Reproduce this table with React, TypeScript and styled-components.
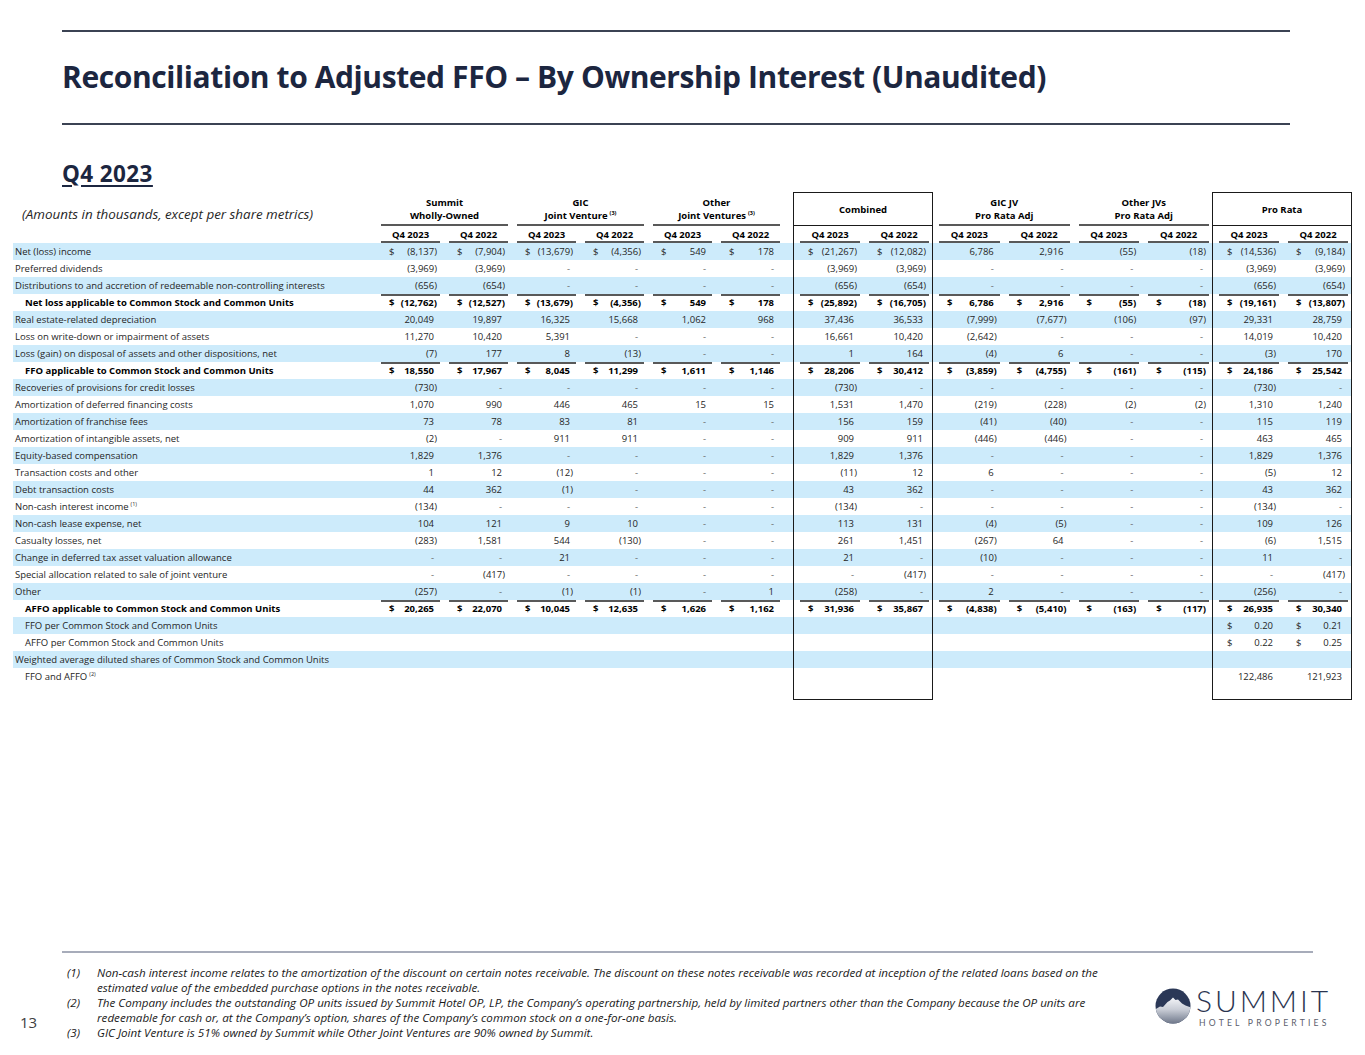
import React from 'react';
import styled, { createGlobalStyle, css } from 'styled-components';

const GlobalStyle = createGlobalStyle`
  html, body {
    margin: 0;
    padding: 0;
    background: #ffffff;
  }
  body {
    font-family: 'Open Sans', 'Liberation Sans', sans-serif;
    color: #262626;
  }
`;

const INK = '#1c2640';
const STRIPE = '#cdebfb';
const LINE = '#595959';
const BOX = '#1a1a1a';
const COLS = '362px repeat(6, 68px) 10px 70px 70px repeat(4, 69.75px) 70px 70px';

type Edge = 'left' | 'right' | undefined;

interface RowData {
  label: string;
  note?: string;
  values: string[];
  total?: boolean;
  indent?: boolean;
}

const E = '';
const empty12 = Array(12).fill(E);

const rows: RowData[] = [
  { label: 'Net (loss) income', values: ['$(8,137)', '$(7,904)', '$(13,679)', '$(4,356)', '$549', '$178', '$(21,267)', '$(12,082)', '6,786', '2,916', '(55)', '(18)', '$(14,536)', '$(9,184)'] },
  { label: 'Preferred dividends', values: ['(3,969)', '(3,969)', '-', '-', '-', '-', '(3,969)', '(3,969)', '-', '-', '-', '-', '(3,969)', '(3,969)'] },
  { label: 'Distributions to and accretion of redeemable non-controlling interests', values: ['(656)', '(654)', '-', '-', '-', '-', '(656)', '(654)', '-', '-', '-', '-', '(656)', '(654)'] },
  { label: 'Net loss applicable to Common Stock and Common Units', total: true, values: ['$(12,762)', '$(12,527)', '$(13,679)', '$(4,356)', '$549', '$178', '$(25,892)', '$(16,705)', '$6,786', '$2,916', '$(55)', '$(18)', '$(19,161)', '$(13,807)'] },
  { label: 'Real estate-related depreciation', values: ['20,049', '19,897', '16,325', '15,668', '1,062', '968', '37,436', '36,533', '(7,999)', '(7,677)', '(106)', '(97)', '29,331', '28,759'] },
  { label: 'Loss on write-down or impairment of assets', values: ['11,270', '10,420', '5,391', '-', '-', '-', '16,661', '10,420', '(2,642)', '-', '-', '-', '14,019', '10,420'] },
  { label: 'Loss (gain) on disposal of assets and other dispositions, net', values: ['(7)', '177', '8', '(13)', '-', '-', '1', '164', '(4)', '6', '-', '-', '(3)', '170'] },
  { label: 'FFO applicable to Common Stock and Common Units', total: true, values: ['$18,550', '$17,967', '$8,045', '$11,299', '$1,611', '$1,146', '$28,206', '$30,412', '$(3,859)', '$(4,755)', '$(161)', '$(115)', '$24,186', '$25,542'] },
  { label: 'Recoveries of provisions for credit losses', values: ['(730)', '-', '-', '-', '-', '-', '(730)', '-', '-', '-', '-', '-', '(730)', '-'] },
  { label: 'Amortization of deferred financing costs', values: ['1,070', '990', '446', '465', '15', '15', '1,531', '1,470', '(219)', '(228)', '(2)', '(2)', '1,310', '1,240'] },
  { label: 'Amortization of franchise fees', values: ['73', '78', '83', '81', '-', '-', '156', '159', '(41)', '(40)', '-', '-', '115', '119'] },
  { label: 'Amortization of intangible assets, net', values: ['(2)', '-', '911', '911', '-', '-', '909', '911', '(446)', '(446)', '-', '-', '463', '465'] },
  { label: 'Equity-based compensation', values: ['1,829', '1,376', '-', '-', '-', '-', '1,829', '1,376', '-', '-', '-', '-', '1,829', '1,376'] },
  { label: 'Transaction costs and other', values: ['1', '12', '(12)', '-', '-', '-', '(11)', '12', '6', '-', '-', '-', '(5)', '12'] },
  { label: 'Debt transaction costs', values: ['44', '362', '(1)', '-', '-', '-', '43', '362', '-', '-', '-', '-', '43', '362'] },
  { label: 'Non-cash interest income', note: '(1)', values: ['(134)', '-', '-', '-', '-', '-', '(134)', '-', '-', '-', '-', '-', '(134)', '-'] },
  { label: 'Non-cash lease expense, net', values: ['104', '121', '9', '10', '-', '-', '113', '131', '(4)', '(5)', '-', '-', '109', '126'] },
  { label: 'Casualty losses, net', values: ['(283)', '1,581', '544', '(130)', '-', '-', '261', '1,451', '(267)', '64', '-', '-', '(6)', '1,515'] },
  { label: 'Change in deferred tax asset valuation allowance', values: ['-', '-', '21', '-', '-', '-', '21', '-', '(10)', '-', '-', '-', '11', '-'] },
  { label: 'Special allocation related to sale of joint venture', values: ['-', '(417)', '-', '-', '-', '-', '-', '(417)', '-', '-', '-', '-', '-', '(417)'] },
  { label: 'Other', values: ['(257)', '-', '(1)', '(1)', '-', '1', '(258)', '-', '2', '-', '-', '-', '(256)', '-'] },
  { label: 'AFFO applicable to Common Stock and Common Units', total: true, values: ['$20,265', '$22,070', '$10,045', '$12,635', '$1,626', '$1,162', '$31,936', '$35,867', '$(4,838)', '$(5,410)', '$(163)', '$(117)', '$26,935', '$30,340'] },
  { label: 'FFO per Common Stock and Common Units', indent: true, values: [...empty12, '$0.20', '$0.21'] },
  { label: 'AFFO per Common Stock and Common Units', indent: true, values: [...empty12, '$0.22', '$0.25'] },
  { label: 'Weighted average diluted shares of Common Stock and Common Units', values: [...empty12, E, E] },
  { label: 'FFO and AFFO', note: '(2)', indent: true, values: [...empty12, '122,486', '121,923'] },
];

const groups = [
  { top: 'Summit', bottom: 'Wholly-Owned' },
  { top: 'GIC', bottom: 'Joint Venture', note: '(3)' },
  { top: 'Other', bottom: 'Joint Ventures', note: '(3)' },
];

const adjGroups = [
  { top: 'GIC JV', bottom: 'Pro Rata Adj' },
  { top: 'Other JVs', bottom: 'Pro Rata Adj' },
];

const edgeOf = (i: number): Edge => (i === 6 || i === 12 ? 'left' : i === 7 || i === 13 ? 'right' : undefined);

const boxEdges = (edge: Edge) => css`
  ${edge === 'left' && `border-left: 1px solid ${BOX};`}
  ${edge === 'right' && `border-right: 1px solid ${BOX};`}
`;

const rule = (pos: 'top' | 'bottom') => css`
  background-image: linear-gradient(${LINE}, ${LINE});
  background-repeat: no-repeat;
  background-size: calc(100% - 9px) 2px;
  background-position: 6px ${pos === 'top' ? '0' : '100%'};
`;

const Page = styled.div`
  width: 1365px;
  height: 1055px;
  box-sizing: border-box;
  padding-top: 30px;
  display: flex;
  flex-direction: column;
  overflow: hidden;
`;

const HeadRule = styled.div<{ $gap: number }>`
  height: 2px;
  margin: ${p => p.$gap}px 75px 0 62px;
  background: #3b4353;
`;

const Title = styled.h1`
  margin: 27px 0 0 62px;
  font-weight: 700;
  font-size: 30px;
  line-height: 36px;
  letter-spacing: -0.4px;
  color: ${INK};
`;

const Period = styled.h2`
  margin: 36px 0 0 62px;
  font-weight: 700;
  font-size: 22.5px;
  line-height: 26px;
  letter-spacing: 0.4px;
  color: ${INK};
  text-decoration: underline;
  text-decoration-thickness: 2px;
  text-underline-offset: 3px;
`;

const Table = styled.div`
  margin: 5px 0 0 13px;
  width: 1339px;
  font-size: 9.5px;
`;

const Grid = styled.div<{ $height: number; $striped?: boolean; $total?: boolean }>`
  display: grid;
  grid-template-columns: ${COLS};
  height: ${p => p.$height}px;
  line-height: 17px;
  background: ${p => (p.$striped ? STRIPE : 'transparent')};
  color: ${p => (p.$total ? '#000000' : '#262626')};
  font-weight: ${p => (p.$total ? 700 : 400)};
`;

const Caption = styled.div`
  align-self: center;
  padding: 10px 0 0 9px;
  font-style: italic;
  font-size: 13.4px;
  line-height: 18px;
  color: #262626;
`;

const GroupHead = styled.div`
  grid-column: span 2;
  display: flex;
  flex-direction: column;
  justify-content: flex-end;
  align-items: center;
  padding: 0 0 4px 3px;
  font-weight: 700;
  line-height: 13px;
  color: #000000;
  ${rule('bottom')}
`;

const BoxHead = styled.div`
  grid-column: span 2;
  display: flex;
  align-items: center;
  justify-content: center;
  border: 1px solid ${BOX};
  font-weight: 700;
  color: #000000;
`;

const Sup = styled.sup`
  font-size: 5.5px;
  line-height: 0;
  margin-left: 2px;
  vertical-align: 4px;
`;

const PeriodHead = styled.div<{ $edge?: Edge }>`
  text-align: center;
  padding-left: 3px;
  font-weight: 700;
  color: #000000;
  ${rule('bottom')}
  ${p => boxEdges(p.$edge)}
`;

const Label = styled.div<{ $indent?: boolean }>`
  padding-left: ${p => (p.$indent ? '12px' : '2px')};
  white-space: nowrap;
`;

const Value = styled.div<{ $edge?: Edge; $rule?: boolean }>`
  display: flex;
  justify-content: space-between;
  padding: 0 6px 0 14px;
  white-space: nowrap;
  ${p => p.$rule && rule('top')}
  ${p => boxEdges(p.$edge)}
`;

const Amount = styled.span<{ $hang?: boolean; $dash?: boolean }>`
  padding-right: ${p => (p.$hang ? '3px' : '0')};
  color: ${p => (p.$dash ? '#666666' : 'inherit')};
`;

const Closer = styled.div<{ $edge?: Edge }>`
  ${p => boxEdges(p.$edge)}
  ${p => p.$edge && `border-bottom: 1px solid ${BOX};`}
`;

const Footer = styled.footer`
  margin-top: auto;
  padding-bottom: 15px;
`;

const FootRule = styled.div`
  height: 2px;
  margin: 0 52px 0 62px;
  background: #a7acba;
`;

const FootBody = styled.div`
  display: flex;
  align-items: flex-start;
  margin-top: 12px;
`;

const PageNumber = styled.div`
  width: 67px;
  box-sizing: border-box;
  padding-left: 20px;
  align-self: flex-end;
  margin-bottom: 8px;
  font-size: 15px;
  line-height: 20px;
  color: #404040;
`;

const Notes = styled.ol`
  margin: 0;
  padding: 0;
  list-style: none;
  font-style: italic;
  font-size: 11.63px;
  line-height: 15px;
  color: #1a1a1a;
  white-space: nowrap;
`;

const Note = styled.li`
  display: flex;
`;

const Marker = styled.span`
  flex: 0 0 30px;
`;

const Logo = styled.div`
  margin: 17px 34px 0 auto;
  display: flex;
  align-items: flex-start;
  gap: 5px;

  svg {
    margin-top: 6px;
  }
`;

const Wordmark = styled.div`
  display: flex;
  flex-direction: column;
`;

const Brand = styled.span`
  font-family: Lato, 'Open Sans', sans-serif;
  font-weight: 300;
  font-size: 30px;
  line-height: 36px;
  letter-spacing: 2.9px;
  color: #2a3450;
`;

const Tagline = styled.span`
  padding-left: 3px;
  font-family: Lato, 'Open Sans', sans-serif;
  font-size: 8.6px;
  line-height: 10px;
  letter-spacing: 3.2px;
  color: #5b606c;
`;

function Gap() {
  return <div />;
}

function ValueCell({ raw, index, top }: { raw: string; index: number; top?: boolean }) {
  const dollar = raw.startsWith('$');
  const amount = dollar ? raw.slice(1) : raw;
  const negative = amount.endsWith(')');
  return (
    <Value $edge={edgeOf(index)} $rule={top}>
      <span>{dollar ? '$' : ''}</span>
      <Amount $hang={!negative && amount !== ''} $dash={amount === '-'}>
        {amount}
      </Amount>
    </Value>
  );
}

function withGap(cells: React.ReactNode[]) {
  return [...cells.slice(0, 6), <Gap key="gap" />, ...cells.slice(6)];
}

function SummitLogo() {
  return (
    <Logo>
      <svg width="36" height="36" viewBox="0 0 36 36" aria-hidden="true">
        <defs>
          <clipPath id="summit-disc">
            <circle cx="18" cy="18" r="17.5" />
          </clipPath>
          <linearGradient id="summit-snow" x1="0" y1="0" x2="0" y2="1">
            <stop offset="0" stopColor="#f4f5f8" />
            <stop offset="0.45" stopColor="#c9cdd6" />
            <stop offset="1" stopColor="#6c7588" />
          </linearGradient>
        </defs>
        <g clipPath="url(#summit-disc)">
          <rect width="36" height="36" fill="#2b3857" />
          <path d="M0 21.5 L5 18.5 L8 19 L12.5 14 L15 12.5 L18 9.5 L20.5 12 L23 11.5 L27 15.5 L30.5 17.5 L36 19.5 V36 H0 Z" fill="url(#summit-snow)" />
        </g>
      </svg>
      <Wordmark>
        <Brand>SUMMIT</Brand>
        <Tagline>HOTEL PROPERTIES</Tagline>
      </Wordmark>
    </Logo>
  );
}

export default function App() {
  const periods = Array.from({ length: 14 }, (_, i) => (
    <PeriodHead key={i} $edge={edgeOf(i)}>
      {i % 2 === 0 ? 'Q4 2023' : 'Q4 2022'}
    </PeriodHead>
  ));

  return (
    <Page>
      <GlobalStyle />
      <HeadRule $gap={0} />
      <Title>Reconciliation to Adjusted FFO – By Ownership Interest (Unaudited)</Title>
      <HeadRule $gap={28} />
      <Period>Q4 2023</Period>

      <Table>
        <Grid $height={34}>
          <Caption>(Amounts in thousands, except per share metrics)</Caption>
          {groups.map(g => (
            <GroupHead key={g.top}>
              <span>{g.top}</span>
              <span>
                {g.bottom}
                {g.note && <Sup>{g.note}</Sup>}
              </span>
            </GroupHead>
          ))}
          <Gap />
          <BoxHead>Combined</BoxHead>
          {adjGroups.map(g => (
            <GroupHead key={g.top}>
              <span>{g.top}</span>
              <span>{g.bottom}</span>
            </GroupHead>
          ))}
          <BoxHead>Pro Rata</BoxHead>
        </Grid>

        <Grid $height={17}>
          <div />
          {withGap(periods)}
        </Grid>

        {rows.map((r, ri) => (
          <Grid key={r.label} $height={17} $striped={ri % 2 === 0} $total={r.total}>
            <Label $indent={r.total || r.indent}>
              {r.label}
              {r.note && <Sup>{r.note}</Sup>}
            </Label>
            {withGap(r.values.map((v, i) => <ValueCell key={i} raw={v} index={i} top={r.total} />))}
          </Grid>
        ))}

        <Grid $height={15}>
          <div />
          {withGap(Array.from({ length: 14 }, (_, i) => <Closer key={i} $edge={edgeOf(i)} />))}
        </Grid>
      </Table>

      <Footer>
        <FootRule />
        <FootBody>
          <PageNumber>13</PageNumber>
          <Notes>
            <Note>
              <Marker>(1)</Marker>
              <span>
                Non-cash interest income relates to the amortization of the discount on certain notes receivable. The discount on these notes receivable was recorded at inception of the related loans based on the
                <br />
                estimated value of the embedded purchase options in the notes receivable.
              </span>
            </Note>
            <Note>
              <Marker>(2)</Marker>
              <span>
                The Company includes the outstanding OP units issued by Summit Hotel OP, LP, the Company’s operating partnership, held by limited partners other than the Company because the OP units are
                <br />
                redeemable for cash or, at the Company’s option, shares of the Company’s common stock on a one-for-one basis.
              </span>
            </Note>
            <Note>
              <Marker>(3)</Marker>
              <span>GIC Joint Venture is 51% owned by Summit while Other Joint Ventures are 90% owned by Summit.</span>
            </Note>
          </Notes>
          <SummitLogo />
        </FootBody>
      </Footer>
    </Page>
  );
}
